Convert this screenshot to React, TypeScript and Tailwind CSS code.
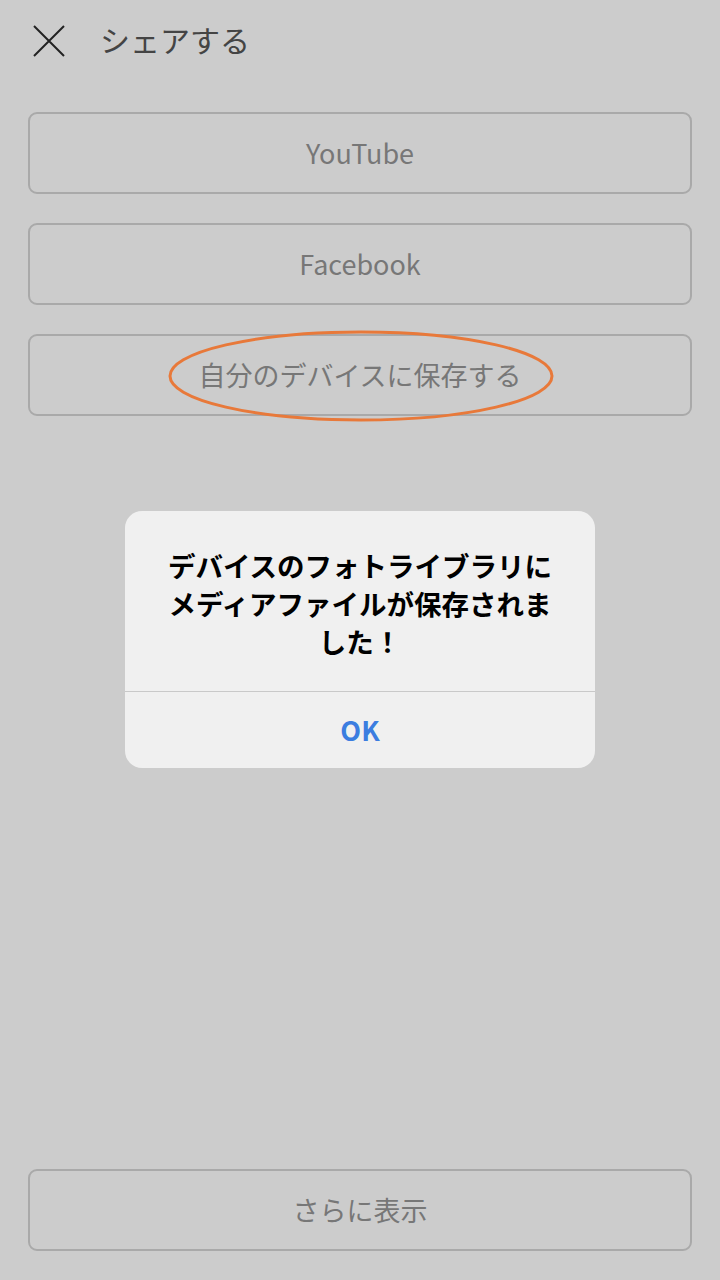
const font = { fontFamily: '"Noto Sans CJK JP", "Noto Sans", sans-serif' }

function ShareButton({ label }: { label: string }) {
  return (
    <button className="w-full h-[82px] rounded-[9px] border-2 border-[#a9a9a9] bg-transparent flex items-center justify-center text-[27px] text-[#777777]">
      {label}
    </button>
  )
}

export default function App() {
  return (
    <div className="relative w-[720px] h-[1280px] bg-[#cccccc] flex flex-col overflow-hidden" style={font}>
      {/* Header */}
      <div className="h-[83px] flex items-center pl-[33px] pb-[2px]">
        <svg width="32" height="32" viewBox="0 0 32 32" className="text-[#222222]">
          <path d="M1 1 L31 31 M31 1 L1 31" stroke="currentColor" strokeWidth="2" fill="none" />
        </svg>
        <h1 className="ml-[35px] -mt-[4px] text-[30px] text-[#444444] font-normal leading-none">シェアする</h1>
      </div>

      <div className="px-[28px] pt-[29px] flex flex-col gap-[29px]">
        <ShareButton label="YouTube" />
        <ShareButton label="Facebook" />
        <ShareButton label="自分のデバイスに保存する" />
      </div>

      <div className="mt-auto px-[28px] pb-[29px]">
        <ShareButton label="さらに表示" />
      </div>

      {/* Highlight ring */}
      <svg className="absolute left-0 top-0 pointer-events-none" width="720" height="1280">
        <ellipse cx="361" cy="376" rx="191" ry="44" fill="none" stroke="#e8793a" strokeWidth="3" />
      </svg>

      {/* Alert */}
      <div className="absolute left-[125px] top-[511px] w-[470px] rounded-[17px] bg-[#f0f0f0] overflow-hidden">
        <div className="pt-[35px] pb-[31px] px-[20px] text-center text-[27.5px] leading-[38px] font-bold text-black">
          デバイスのフォトライブラリに
          <br />
          メディアファイルが保存されま
          <br />
          した！
        </div>
        <div className="h-px bg-[#c9c9c9]" />
        <button className="w-full h-[76px] flex items-center justify-center text-[27px] font-bold text-[#3b7de0]">
          OK
        </button>
      </div>
    </div>
  )
}
